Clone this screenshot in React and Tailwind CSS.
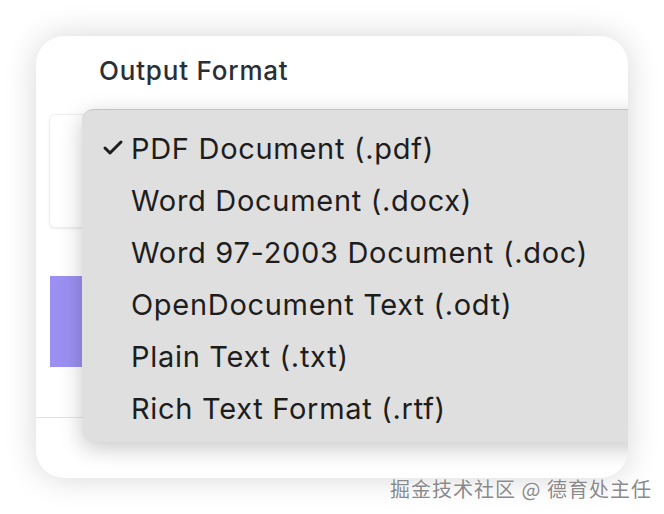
import { Check } from 'lucide-react';

const formats = [
  'PDF Document (.pdf)',
  'Word Document (.docx)',
  'Word 97-2003 Document (.doc)',
  'OpenDocument Text (.odt)',
  'Plain Text (.txt)',
  'Rich Text Format (.rtf)',
];

const FormatMenu = ({ selected }) => (
  <div className="absolute left-[46px] top-[73px] w-[600px] rounded-[12px] border-t border-[#c4c4c4] bg-[#dfdfdf] pt-[12px] pb-[8px] shadow-[0_6px_22px_rgba(0,0,0,0.22)]">
    {formats.map((label, i) => (
      <div key={label} className="flex h-[52px] items-center">
        <div className="flex w-[49px] justify-end pr-[6px]">
          {i === selected && <Check className="h-[24px] w-[24px] text-[#1d1d1d]" strokeWidth={3} />}
        </div>
        <span className="text-[29px] leading-none tracking-[0.7px] text-[#1d1d1d]">{label}</span>
      </div>
    ))}
  </div>
);

export default function App() {
  return (
    <div className="relative h-[514px] w-[664px] overflow-hidden bg-white pl-[36px] pt-[36px] font-['Inter','Noto_Sans',sans-serif]">
      <div className="relative h-[442px] w-[592px] overflow-hidden rounded-[28px] bg-white shadow-[0_0_32px_rgba(0,0,0,0.16)]">
        {/* panel underneath the open menu */}
        <div className="flex h-full flex-col">
          <h2 className="pl-[63px] pt-[20px] text-[26px] font-medium leading-[30px] tracking-[0.8px] text-[#2a2f36]">Output Format</h2>
          <div className="ml-[13px] mt-[28px] h-[114px] rounded-[6px] border border-[#eeeeee] bg-white shadow-[0_1px_2px_rgba(0,0,0,0.08)]" />
          <div className="ml-[14px] mt-[48px] h-[91px] bg-[#9b90f2]" />
          <div className="mt-[50px] border-t border-[#e3e3e3]" />
        </div>

        <FormatMenu selected={0} />
      </div>

      <div className="absolute left-[390px] top-[474px] text-[20px] tracking-[1px] text-[#8a8a8a] font-['Noto_Sans_CJK_SC',sans-serif] [text-shadow:0_0_2px_#fff,0_0_1px_#fff]">
        掘金技术社区 @ 德育处主任
      </div>
    </div>
  );
}
